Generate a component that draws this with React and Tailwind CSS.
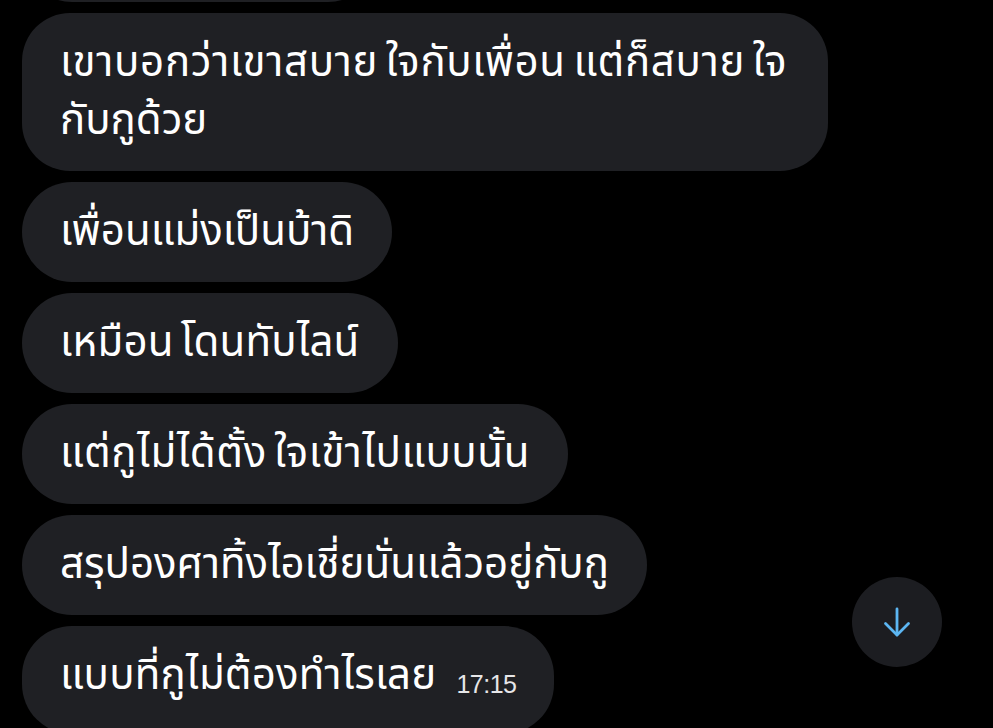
import React from "react";

const font = { fontFamily: '"Noto Sans Thai", "Noto Sans", "Liberation Sans", sans-serif' };

function Bubble({ children, time, extra = "" }) {
  return (
    <div className={"self-start whitespace-nowrap rounded-[50px] bg-[#1f2024] px-[38px] py-[21px] text-[42px] leading-[58px] text-white [word-spacing:-4px] " + extra} style={font}>
      {children}
      {time && (
        <span className="ml-[20px] align-[-4px] text-[25px] tracking-[-0.5px] text-[#e6e6e8]" style={{ fontFamily: '"Liberation Sans", sans-serif' }}>
          {time}
        </span>
      )}
    </div>
  );
}

export default function App() {
  return (
    <div className="relative h-[728px] w-[993px] overflow-hidden bg-black">
      <div className="mt-[-98px] flex flex-col gap-[11px] pl-[22px]">
        <div className="h-[100px] w-[356px] rounded-[50px] bg-[#1f2024]" />
        <div className="w-[806px] rounded-[48px] bg-[#1f2024] px-[38px] py-[21px] text-[42px] leading-[58px] text-white [word-spacing:-4px]" style={font}>
          <span className="whitespace-nowrap tracking-[0.7px]">เขาบอกว่าเขาสบาย ใจกับเพื่อน แต่ก็สบาย ใจ</span>
          <br />
          กับกูด้วย
        </div>
        <Bubble extra="tracking-[0px]">เพื่อนแม่งเป็นบ้าดิ</Bubble>
        <Bubble extra="tracking-[0.2px]">เหมือน โดนทับไลน์</Bubble>
        <Bubble extra="tracking-[0.6px]">แต่กูไม่ได้ตั้ง ใจเข้าไปแบบนั้น</Bubble>
        <Bubble extra="tracking-[0px]">สรุปองศาทิ้งไอเชี่ยนั่นแล้วอยู่กับกู</Bubble>
        <Bubble extra="tracking-[0.2px]" time="17:15">แบบที่กูไม่ต้องทำไรเลย</Bubble>
      </div>
      <div className="absolute left-[852px] top-[577px] flex h-[90px] w-[90px] items-center justify-center rounded-full bg-[#1c1d21]">
        <svg width="30" height="32" viewBox="0 0 30 32" fill="none" stroke="#5cb6f2" strokeWidth="2.8" strokeLinecap="round" strokeLinejoin="round">
          <path d="M15 3v26" />
          <path d="M3.5 17.5L15 29l11.5-11.5" />
        </svg>
      </div>
    </div>
  );
}
